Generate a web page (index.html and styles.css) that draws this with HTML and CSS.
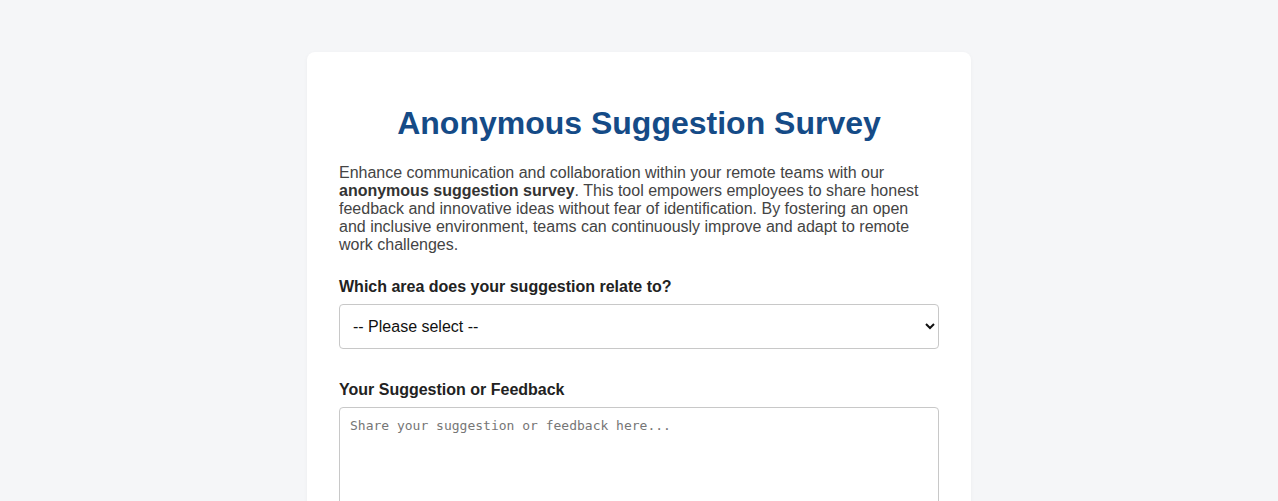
FILE: index.html
```html
<!DOCTYPE html>
<html lang="en">
<head>
<meta charset="utf-8">
<title>Anonymous Suggestion Survey</title>
<link rel="stylesheet" href="styles.css">
</head>
<body>
<main class="card">
  <h1 class="title">Anonymous Suggestion Survey</h1>
  <p class="intro">Enhance communication and collaboration within your remote teams with our <strong>anonymous suggestion survey</strong>. This tool empowers employees to share honest feedback and innovative ideas without fear of identification. By fostering an open and inclusive environment, teams can continuously improve and adapt to remote work challenges.</p>
  <form class="form">
    <div class="group">
      <label class="label" for="area">Which area does your suggestion relate to?</label>
      <select id="area" class="select">
        <option>-- Please select --</option>
        <option>Communication</option>
        <option>Collaboration</option>
        <option>Tools &amp; Technology</option>
        <option>Other</option>
      </select>
    </div>
    <div class="group">
      <label class="label" for="fb">Your Suggestion or Feedback</label>
      <textarea id="fb" class="textarea" rows="8" placeholder="Share your suggestion or feedback here..."></textarea>
    </div>
  </form>
</main>
</body>
</html>
```
FILE: styles.css
```css
html, body {
  margin: 0;
  padding: 0;
}
body {
  background: #f5f6f8;
  font-family: "Liberation Sans", Arial, sans-serif;
  color: #333;
  padding: 52px 20px 40px;
}
.card {
  box-sizing: border-box;
  width: 664px;
  margin: 0 auto;
  background: #fff;
  border-radius: 8px;
  padding: 32px;
  box-shadow: 0 1px 4px rgba(0, 0, 0, 0.04);
}
.title {
  font-size: 32px;
  font-weight: bold;
  color: #154b87;
  text-align: center;
  margin: 21px 0 22px;
  line-height: 37px;
}
.intro {
  font-size: 16px;
  line-height: 18px;
  color: #444;
  margin: 0 0 24px;
}
.intro strong {
  color: #333;
}
.form {
  display: flex;
  flex-direction: column;
  gap: 32px;
}
.group {
  display: flex;
  flex-direction: column;
  gap: 8px;
}
.label {
  font-size: 16px;
  line-height: 18px;
  font-weight: bold;
  color: #222;
}
.select {
  box-sizing: border-box;
  width: 100%;
  height: 45px;
  padding: 0 9px;
  font-family: "Liberation Sans", Arial, sans-serif;
  font-size: 16px;
  color: #111;
  background: #fff;
  border: 1px solid #c8c8c8;
  border-radius: 4px;
}
.textarea {
  box-sizing: border-box;
  width: 100%;
  height: 140px;
  padding: 10px;
  font-family: "DejaVu Sans Mono", "Liberation Mono", monospace;
  font-size: 13px;
  color: #222;
  border: 1px solid #c8c8c8;
  border-radius: 4px;
  resize: vertical;
}
.textarea::placeholder {
  color: #767676;
}
```
